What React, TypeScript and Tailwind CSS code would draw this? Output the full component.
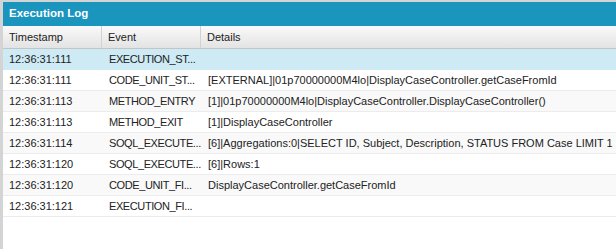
import React from "react";

const rows: [string, string, string][] = [
  ["12:36:31:111", "EXECUTION_ST...", ""],
  ["12:36:31:111", "CODE_UNIT_ST...", "[EXTERNAL]|01p70000000M4lo|DisplayCaseController.getCaseFromId"],
  ["12:36:31:113", "METHOD_ENTRY", "[1]|01p70000000M4lo|DisplayCaseController.DisplayCaseController()"],
  ["12:36:31:113", "METHOD_EXIT", "[1]|DisplayCaseController"],
  ["12:36:31:114", "SOQL_EXECUTE...", "[6]|Aggregations:0|SELECT ID, Subject, Description, STATUS FROM Case LIMIT 1"],
  ["12:36:31:120", "SOQL_EXECUTE...", "[6]|Rows:1"],
  ["12:36:31:120", "CODE_UNIT_FI...", "DisplayCaseController.getCaseFromId"],
  ["12:36:31:121", "EXECUTION_FI...", ""],
];

export default function App() {
  return (
    <div
      className="w-[616px] h-[249px] bg-[#d4d4d4] pt-[2px] pl-[3px] overflow-hidden"
      style={{ fontFamily: '"Liberation Sans", Arial, sans-serif' }}
    >
      <div className="h-full bg-white flex flex-col">
        <div className="h-[24px] bg-[#1995be] text-white font-bold text-[11.5px] flex items-center pl-[6px]">
          Execution Log
        </div>
        <div className="h-[23px] flex text-[11px] text-[#222] bg-gradient-to-b from-[#fafafa] to-[#e3e3e3] border-b border-[#c4c4c4]">
          <div className="w-[99px] border-r border-[#d2d2d2] flex items-center pl-[6px]">Timestamp</div>
          <div className="w-[99px] border-r border-[#d2d2d2] flex items-center pl-[6px]">Event</div>
          <div className="flex-1 flex items-center pl-[6px]">Details</div>
        </div>
        <div className="flex flex-col text-[11px] text-[#222]">
          {rows.map((r, i) => (
            <div
              key={i}
              className={
                "h-[21px] flex items-center border-b " +
                (i === 0
                  ? "bg-[#cdeaf5] border-[#cdeaf5]"
                  : i % 2 === 1
                  ? "bg-white border-[#ececec]"
                  : "bg-[#f9f9f9] border-[#ececec]")
              }
            >
              <div className="w-[99px] pl-[6px] whitespace-nowrap">{r[0]}</div>
              <div className="w-[99px] pl-[7px] whitespace-nowrap overflow-hidden tracking-[-0.4px]">{r[1]}</div>
              <div className="flex-1 pl-[7px] whitespace-nowrap overflow-hidden">{r[2]}</div>
            </div>
          ))}
        </div>
      </div>
    </div>
  );
}
